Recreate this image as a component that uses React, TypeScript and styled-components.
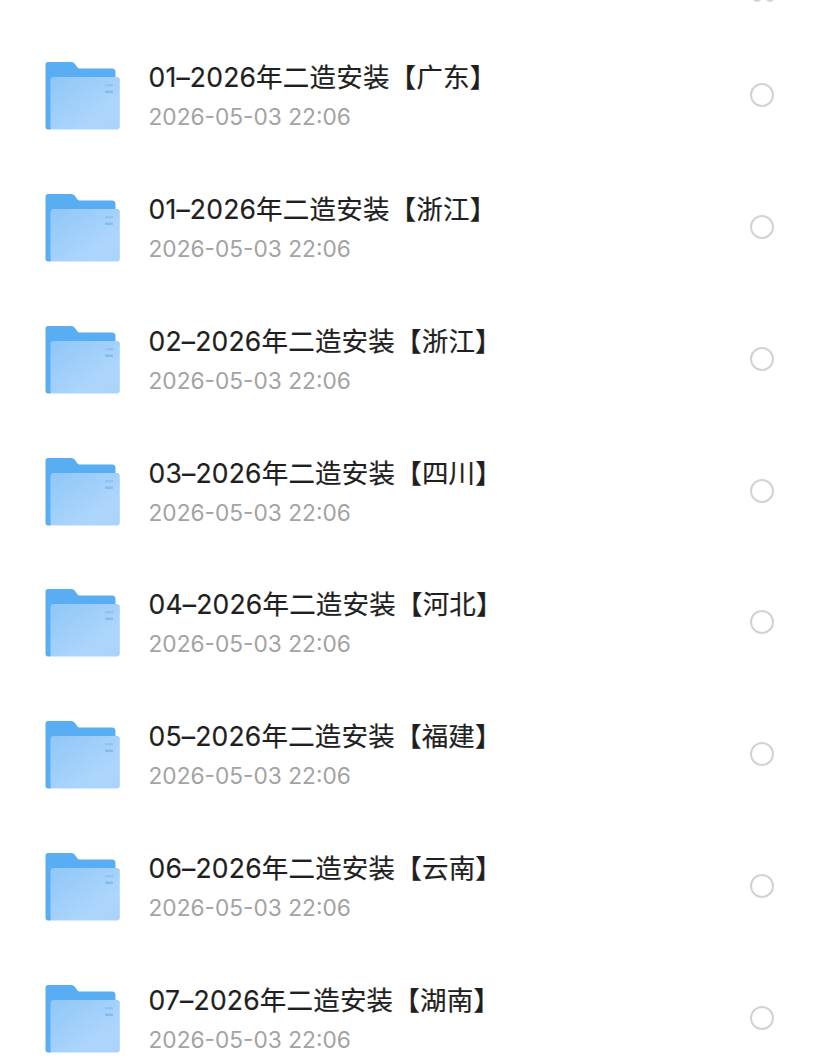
import React from "react";
import styled, { createGlobalStyle } from "styled-components";

const folders = [
  "01–2026年二造安装【广东】",
  "01–2026年二造安装【浙江】",
  "02–2026年二造安装【浙江】",
  "03–2026年二造安装【四川】",
  "04–2026年二造安装【河北】",
  "05–2026年二造安装【福建】",
  "06–2026年二造安装【云南】",
  "07–2026年二造安装【湖南】",
];

const FolderIcon = ({ id }: { id: number }) => (
  <FolderSvg width="76" height="70" viewBox="0 0 76 70">
    <defs>
      <linearGradient id={`front-${id}`} x1="0" y1="0" x2="1" y2="1">
        <stop offset="0" stopColor="#8fc7f7" />
        <stop offset="0.75" stopColor="#aed6fc" />
        <stop offset="1" stopColor="#a9d3fb" />
      </linearGradient>
    </defs>
    <path
      d="M3 1h23c2 0 3 .8 4 2l2.500 3.500c.6.8 1.300 1 2.300 1H67c2.500 0 3.500 1.500 3.500 3.500V60H6v8.500H3c-1.500 0-2.500-1-2.500-2.500V3.500C.5 2 1.500 1 3 1z"
      fill="#59aef3"
    />
    <path
      d="M8.500 16H72c1.700 0 2.800 1 2.800 2.800V65.500c0 1.800-1.100 3-2.800 3H8c-1.800 0-2.500-1.200-2.500-3V19c0-1.800 1.200-3 3-3z"
      fill={`url(#front-${id})`}
    />
    <rect x="60" y="23" width="8" height="2.500" fill="#8fc4f3" />
    <rect x="60" y="29.500" width="8" height="2.500" fill="#84bdf0" />
  </FolderSvg>
);

const App = () => {
  return (
    <>
      <GlobalStyle />
      <Page>
        <TopEdge>
          <Bump />
          <Bump />
        </TopEdge>
        <List>
          {folders.map((name, index) => (
            <Row key={index}>
              <FolderIcon id={index} />
              <Info>
                <Name>{name}</Name>
                <Time>2026-05-03 22:06</Time>
              </Info>
              <Radio />
            </Row>
          ))}
        </List>
      </Page>
    </>
  );
};

export default App;

const GlobalStyle = createGlobalStyle`
  html, body {
    margin: 0;
    padding: 0;
    background: #fff;
  }
`;
const Page = styled.div`
  position: relative;
  width: 828px;
  height: 1058px;
  overflow: hidden;
  background: #fff;
  font-family: "Inter", "Noto Sans CJK SC", sans-serif;
`;
const TopEdge = styled.div`
  position: absolute;
  top: -8px;
  left: 752px;
  display: flex;
  gap: 3px;
`;
const Bump = styled.div`
  width: 10px;
  height: 10px;
  border: 2px solid #d4d4d4;
  border-radius: 50%;
  box-sizing: border-box;
`;
const List = styled.div`
  padding-top: 29px;
`;
const Row = styled.div`
  display: flex;
  align-items: center;
  height: 131.86px;
  padding: 0 54px 0 45px;
  box-sizing: border-box;
`;
const FolderSvg = styled.svg`
  margin-top: 2px;
`;
const Info = styled.div`
  flex: 1;
  margin: 2px 0 0 27.500px;
  display: flex;
  flex-direction: column;
  gap: 10px;
`;
const Name = styled.div`
  font-size: 26.500px;
  line-height: 32px;
  letter-spacing: 0.2px;
  color: #1f1f1f;
  white-space: nowrap;
  -webkit-text-stroke: 0.2px #1f1f1f;
`;
const Time = styled.div`
  font-size: 22.700px;
  line-height: 28px;
  color: #a3a3a3;
  white-space: nowrap;
`;
const Radio = styled.div`
  width: 24px;
  height: 24px;
  border: 2px solid #d2d2d2;
  border-radius: 50%;
  box-sizing: border-box;
`;
